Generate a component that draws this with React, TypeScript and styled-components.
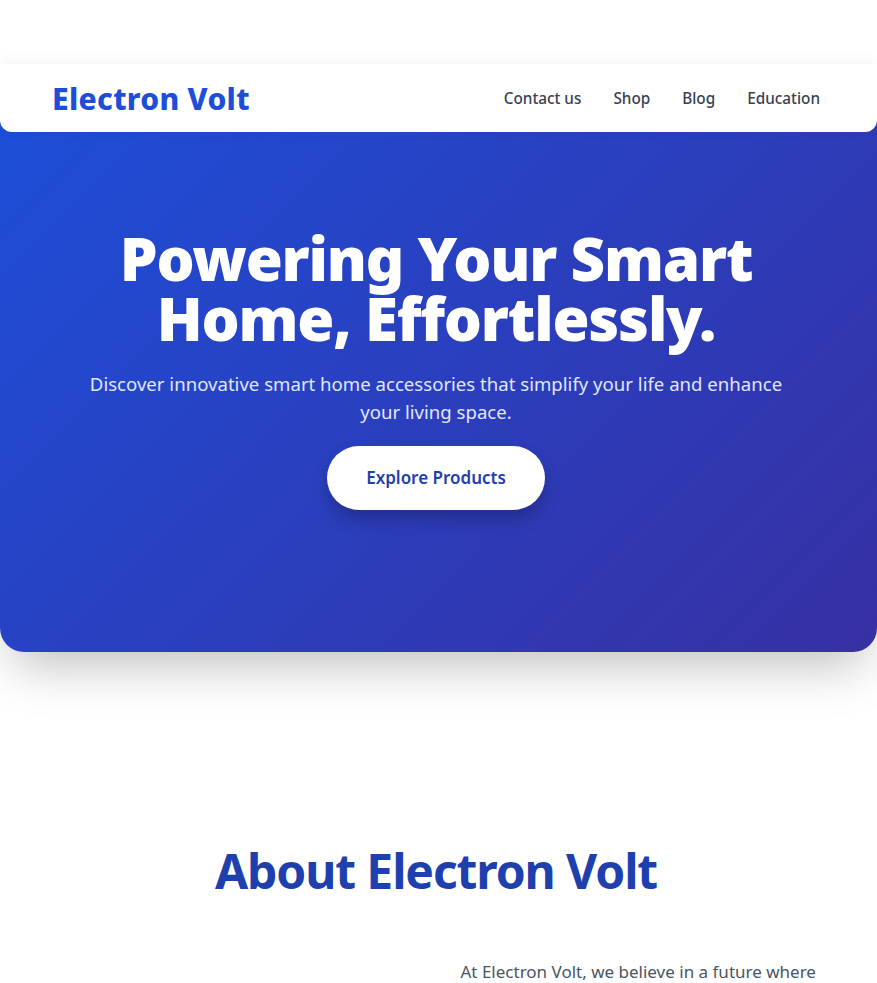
import React from "react";
import styled, { createGlobalStyle } from "styled-components";

const GlobalStyle = createGlobalStyle`
  * { box-sizing: border-box; }
  html, body { margin: 0; padding: 0; background: #ffffff; }
  body {
    font-family: "Noto Sans", "Open Sans", Arial, sans-serif;
    color: #1f2937;
    -webkit-font-smoothing: antialiased;
  }
`;

const Page = styled.div`
  padding-top: 64px;
`;

const Header = styled.header`
  position: relative;
  z-index: 10;
  height: 68px;
  background: #ffffff;
  border-radius: 0 0 12px 12px;
  box-shadow: 0 -2px 14px rgba(0, 0, 0, 0.05);
  display: flex;
  align-items: center;
  justify-content: space-between;
  padding: 0 57px 0 52px;
`;

const Logo = styled.a`
  font-size: 30px;
  font-weight: 800;
  color: #1d4ed8;
  text-decoration: none;
  letter-spacing: 0.3px;
`;

const Nav = styled.nav`
  display: flex;
  gap: 32px;
`;

const NavLink = styled.a`
  font-size: 15.3px;
  font-weight: 500;
  color: #374151;
  text-decoration: none;
`;

const Hero = styled.section`
  margin-top: -24px;
  padding: 120px 53px 142px 48px;
  background: linear-gradient(135deg, #1d4ed8 0%, #3730a3 100%);
  border-radius: 0 0 24px 24px;
  box-shadow: 0 25px 50px -12px rgba(0, 0, 0, 0.25);
  display: flex;
  flex-direction: column;
  align-items: center;
  text-align: center;
  color: #ffffff;
`;

const HeroTitle = styled.h1`
  margin: 0;
  max-width: 768px;
  font-size: 60px;
  line-height: 1;
  font-weight: 900;
  letter-spacing: -1.2px;
`;

const HeroText = styled.p`
  margin: 22px 0 0;
  max-width: 700px;
  font-size: 18.6px;
  line-height: 28px;
  color: #e0e7ff;
`;

const HeroButton = styled.a`
  margin-top: 20px;
  display: inline-block;
  padding: 18px 39px;
  background: #ffffff;
  color: #1e40af;
  font-size: 17px;
  line-height: 28px;
  font-weight: 600;
  border-radius: 9999px;
  text-decoration: none;
  box-shadow: 0 10px 20px -4px rgba(0, 0, 0, 0.3);
`;

const About = styled.section`
  padding: 190px 56px 80px;
`;

const AboutTitle = styled.h2`
  margin: 0;
  padding-right: 5px;
  text-align: center;
  font-size: 48px;
  line-height: 1.2;
  font-weight: 700;
  letter-spacing: -1.1px;
  color: #1e40af;
`;

const AboutGrid = styled.div`
  margin-top: 58px;
  display: grid;
  grid-template-columns: 1fr 1fr;
  gap: 44px;
  align-items: start;
`;

const AboutVisual = styled.div`
  height: 240px;
  margin-top: 60px;
  border-radius: 16px;
  background: linear-gradient(135deg, #dbeafe, #e0e7ff);
`;

const AboutText = styled.p`
  margin: 0;
  font-size: 17px;
  line-height: 28px;
  color: #4b5563;
`;

export default function App() {
  return (
    <>
      <GlobalStyle />
      <Page>
        <Header>
          <Logo href="#">Electron Volt</Logo>
          <Nav>
            <NavLink href="#">Contact us</NavLink>
            <NavLink href="#">Shop</NavLink>
            <NavLink href="#">Blog</NavLink>
            <NavLink href="#">Education</NavLink>
          </Nav>
        </Header>
        <Hero>
          <HeroTitle>Powering Your Smart Home, Effortlessly.</HeroTitle>
          <HeroText>
            Discover innovative smart home accessories that simplify your life and enhance your living space.
          </HeroText>
          <HeroButton href="#">Explore Products</HeroButton>
        </Hero>
        <About>
          <AboutTitle>About Electron Volt</AboutTitle>
          <AboutGrid>
            <AboutVisual aria-hidden="true" />
            <AboutText>
              At Electron Volt, we believe in a future where technology works seamlessly in the
              background, making everyday life simpler, safer and more comfortable. Our smart home
              accessories are designed to connect effortlessly, save energy and bring intelligent
              control to every corner of your home.
            </AboutText>
          </AboutGrid>
        </About>
      </Page>
    </>
  );
}
